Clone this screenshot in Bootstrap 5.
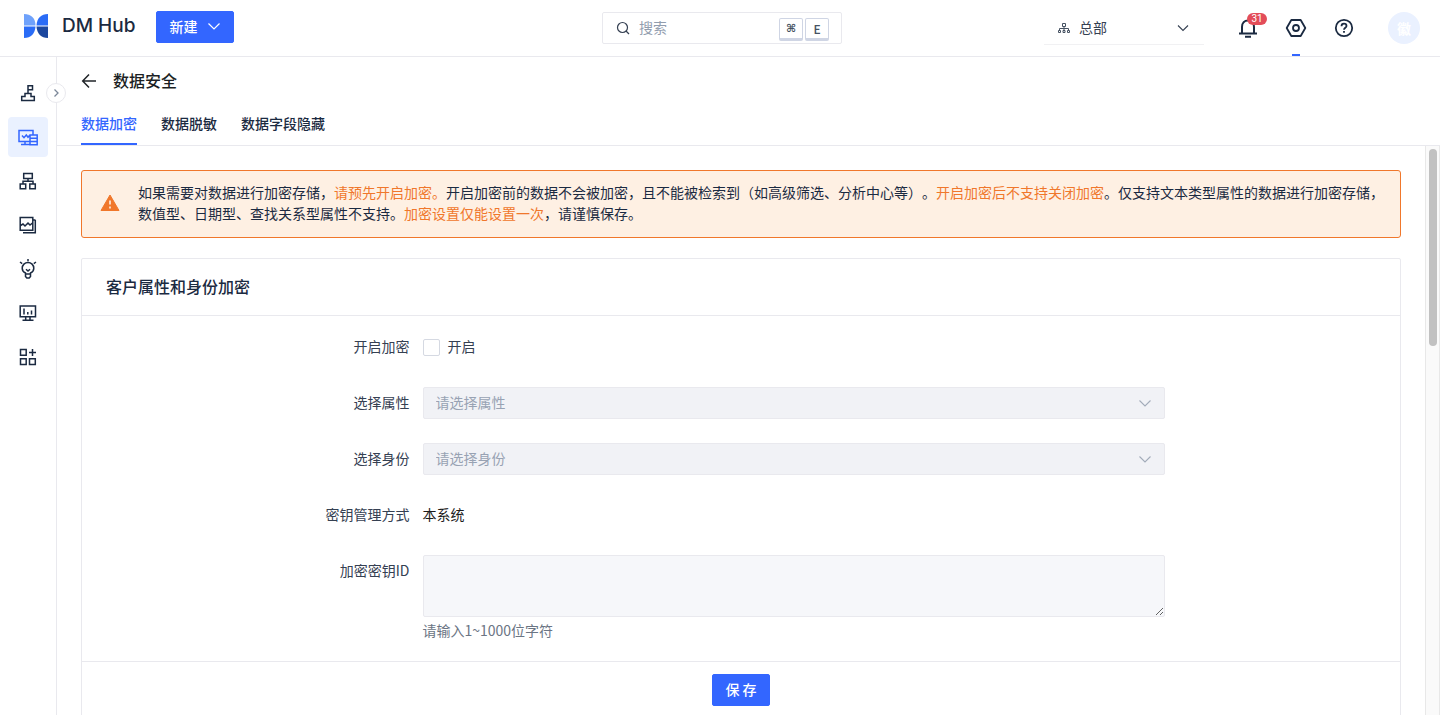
<!DOCTYPE html>
<html lang="zh-CN">
<head>
<meta charset="utf-8">
<meta name="viewport" content="width=device-width, initial-scale=1">
<title>数据安全 - DM Hub</title>
<link href="https://cdn.jsdelivr.net/npm/bootstrap@5.3.0/dist/css/bootstrap.min.css" rel="stylesheet">
<style>
  :root { --ink: #1b2a41; --brand: #3366ff; --line: #e9e9ee; --orange: #f0772b; }
  body { font-family: "Noto Sans CJK SC", sans-serif; font-size: 14px; line-height: 22px; color: var(--ink); background: #fff; text-spacing-trim: space-all; }
  svg { display: block; flex: none; }
  .stroke { fill: none; stroke: currentColor; stroke-width: 1.5; }
  .app-head { height: 57px; border-bottom: 1px solid var(--line); }
  .head-side { flex: 1 1 0; min-width: 0; }
  .head-left { padding: 11px 0 0 24px; gap: 21px; }
  .head-right { padding-right: 20px; gap: 24px; }
  .home-link { height: 30px; gap: 14px; }
  .logo-text { font: 500 19px/30px Inter, sans-serif; color: var(--ink); }
  .btn-brand { --bs-btn-bg: var(--brand); --bs-btn-border-color: var(--brand); --bs-btn-color: #fff; --bs-btn-hover-bg: #5581ff; --bs-btn-hover-color: #fff; --bs-btn-hover-border-color: #5581ff; --bs-btn-active-bg: #2350dd; --bs-btn-active-color: #fff; --bs-btn-border-radius: 2px; --bs-btn-padding-x: 12px; --bs-btn-font-size: 14px; --bs-btn-line-height: 22px; --bs-btn-font-weight: 500; padding-top: 3px; padding-bottom: 5px; }
  .btn-new { gap: 10px; }
  .search-box { width: 240px; height: 32px; margin-top: 12px; border: 1px solid var(--line); border-radius: 2px; padding: 0 12px; color: #354052; }
  .search-box input { min-width: 0; flex: 1; border: 0; outline: 0; padding: 0 0 2px; color: var(--ink); }
  .search-box input::placeholder { color: #929dae; }
  .key { width: 24px; height: 23px; margin-top: 3px; padding: 0; font: 500 12px/19px "Noto Sans CJK SC", sans-serif; text-align: center; color: #465262; background: #fff; border: 1px solid #cfd5e4; border-bottom-width: 3px; border-radius: 2px; }
  .key-cmd { font-family: "DejaVu Sans", sans-serif; font-size: 11px; font-weight: 700; }
  .org { width: 160px; height: 33px; position: relative; border-bottom: 1px solid #f1f1f3; margin-right: 8px; }
  .org > svg { position: absolute; left: 14px; top: 10px; pointer-events: none; }
  .org select { border: 0; border-radius: 0; padding: 0 36px 2px 35px; font-size: 14px; line-height: 30px; color: #354052; background-position: right 14px center; background-size: 14px; background-color: transparent; background-image: url("data:image/svg+xml,%3Csvg xmlns='http://www.w3.org/2000/svg' viewBox='0 0 14 14' fill='none' stroke='%23354052' stroke-width='1.1'%3E%3Cpath d='M2 4.5l5 5 5-5'/%3E%3C/svg%3E"); }
  .head-btn { width: 24px; height: 56px; padding: 0; border: 0; background: none; color: var(--ink); position: relative; display: flex; align-items: center; justify-content: center; }
  .head-btn.current::after { content: ""; position: absolute; bottom: 0; left: 8px; width: 8px; height: 2px; background: var(--brand); }
  .count { position: absolute; left: 11px; top: 13px; width: 20px; height: 12px; border-radius: 6px; background: #e34d59; color: #fff; font: 10px/12px Roboto, sans-serif; text-align: center; }
  .face { width: 32px; height: 32px; margin-left: 8px; padding: 0; border: 0; border-radius: 50%; background: #eaf1ff; color: #fff; font-size: 14px; font-weight: 700; }
  .shell { height: calc(100vh - 57px); }
  .side { width: 57px; flex: none; border-right: 1px solid var(--line); padding: 16px 8px 0; position: relative; }
  .side-link { width: 40px; height: 40px; border-radius: 4px; display: flex; align-items: center; justify-content: center; color: var(--ink); }
  .side-link.active { background: #eaf1ff; color: var(--brand); }
  .fold { position: absolute; right: -10px; top: 26px; width: 20px; height: 20px; padding: 0; border: 1px solid var(--line); border-radius: 50%; background: #fff; color: #7b8798; display: flex; align-items: center; justify-content: center; z-index: 2; }
  .page-head { border-bottom: 1px solid var(--line); padding: 0 24px; flex: none; }
  .page-title { font-size: 16px; line-height: 46px; padding-bottom: 2px; font-weight: 500; margin: 0; color: #1c1f24; }
  .tab { color: var(--ink); text-decoration: none; font-weight: 500; line-height: 22px; padding: 7px 0 9px; border-bottom: 2px solid transparent; height: 40px; }
  .tab.active { color: var(--brand); border-color: var(--brand); }
  .scroll-pane { min-width: 0; overflow: hidden; padding: 24px 24px 0; }
  .track { width: 15px; flex: none; background: #fafafa; border: 1px solid #e8e8e8; border-width: 0 1px; padding: 3px 2px 3px 3px; }
  .thumb { height: 35%; border-radius: 4px; background: #c1c1c1; }
  .notice { border: 1px solid var(--orange); border-radius: 3px; background: #fef0e3; padding: 11px 16px 13px 18px; line-height: 21px; gap: 18px; margin-bottom: 20px; }
  .hot { color: var(--orange); }
  .panel { border: 1px solid var(--line); border-radius: 2px; height: 100vh; }
  .panel-title { font-size: 16px; line-height: 24px; font-weight: 500; margin: 0; padding: 15px 24px 17px; border-bottom: 1px solid var(--line); }
  .panel-form { padding: 15px 0 18px; display: grid; row-gap: 24px; }
  .form-line { --bs-gutter-x: 22px; margin: 0; }
  .form-line > .name { padding: 4px 2px 6px 0; text-align: right; color: #354052; line-height: 22px; }
  .form-line > .field { width: 58%; }
  .plain { line-height: 22px; padding: 4px 0 6px; color: #1c1c1c; }
  .pick { height: 32px; font-size: 14px; line-height: 22px; padding: 3px 36px 5px 12px; border: 1px solid var(--line); border-radius: 2px; background-position: right 12px center; background-size: 14px; background-image: url("data:image/svg+xml,%3Csvg xmlns='http://www.w3.org/2000/svg' viewBox='0 0 14 14' fill='none' stroke='%23a3acba' stroke-width='1.1'%3E%3Cpath d='M1.500 4.500l5.500 5.500 5.500-5.500'/%3E%3C/svg%3E"); }
  .pick:disabled { color: #98a2b3; opacity: 1; background-color: #f1f2f6; }
  .tick { width: 17px; height: 17px; margin: 0; border: 1px solid #d5d9e2; border-radius: 2px !important; }
  .tick-label { color: #354052; padding-bottom: 2px; }
  .key-id { height: 62px; border: 1px solid var(--line); border-radius: 2px; font-size: 14px; padding: 4px 12px; }
  .key-id:disabled { background: #f6f7fa; }
  .hint { color: #6b7584; line-height: 22px; padding: 2px 0; }
  .panel-foot { border-top: 1px solid var(--line); padding: 12px; }
</style>
</head>
<body class="overflow-hidden">
<header class="app-head d-flex align-items-start">
  <div class="head-side head-left d-flex align-items-start">
    <a href="#" class="home-link d-flex align-items-center text-decoration-none">
      <svg width="24" height="24" viewBox="0 0 24 24"><path d="M0 0C7 0 11.500 4 11.500 11.500H0Z" fill="#6fa2fb"/><path d="M0 12.500H11.500C11 19.500 7 24 0 24Z" fill="#2a6cf6"/><path d="M24 0V11.500H12.500C13 4 17 0 24 0Z" fill="#2a6cf6"/><path d="M12.500 12.500H24V24C17 24 13 19.500 12.500 12.500Z" fill="#1c489f"/></svg>
      <span class="logo-text">DM Hub</span>
    </a>
    <button type="button" class="btn btn-brand btn-new d-flex align-items-center">新建
      <svg width="14" height="14" viewBox="0 0 14 14" fill="none" stroke="currentColor" stroke-width="1.200"><path d="M1.500 4.500 7 10l5.500-5.500"/></svg>
    </button>
  </div>
  <div class="search-box d-flex align-items-center gap-2">
    <svg width="16" height="16" viewBox="0 0 16 16" class="stroke" style="stroke-width:1.200"><circle cx="7.500" cy="7.500" r="5"/><path d="m11 11 3 3"/></svg>
    <input type="text" placeholder="搜索" aria-label="搜索">
    <span class="d-flex" style="gap:2px"><kbd class="key key-cmd">⌘</kbd><kbd class="key">E</kbd></span>
  </div>
  <div class="head-side head-right d-flex justify-content-end align-items-center">
    <div class="org">
      <svg width="12" height="12" viewBox="0 0 12 12" fill="none" stroke="#465262"><path d="M4.500 1.500h3v3h-3zM6 4.500v2.500M1.500 8.500V6.500h9v2M6 6.500v2M.5 8.500h2v2h-2zM5 8.500h2v2H5zM9.500 8.500h2v2h-2z"/></svg>
      <select class="form-select" aria-label="组织"><option>总部</option></select>
    </div>
    <button type="button" class="head-btn bell" aria-label="通知">
      <svg width="20" height="20" viewBox="0 0 20 20" class="stroke" style="stroke-width:2"><path d="M1 15.500h18M4 15.500V9c0-4 2.500-6.500 6-6.500s6 2.500 6 6.500v6.500M7 18.700h6"/></svg>
      <span class="count">31</span>
    </button>
    <button type="button" class="head-btn current" aria-label="设置">
      <svg width="22" height="20" viewBox="0 0 22 20" class="stroke" style="stroke-width:1.800"><path d="M6.300 2h9.400l4.600 8-4.600 8H6.300l-4.600-8z" stroke-linejoin="round"/><circle cx="11" cy="10" r="3"/></svg>
    </button>
    <button type="button" class="head-btn" aria-label="帮助">
      <svg width="20" height="20" viewBox="0 0 20 20" class="stroke" style="stroke-width:1.800"><circle cx="10" cy="10" r="8.200"/><path d="M7.500 8.200C7.500 6.500 8.600 5.700 10 5.700s2.500.9 2.500 2.300c0 1.700-2.500 1.900-2.500 3.700M10 13v1.800"/></svg>
    </button>
    <button type="button" class="face">徽</button>
  </div>
</header>

<div class="shell d-flex">
  <nav class="side d-flex flex-column gap-1" aria-label="主导航">
    <a href="#" class="side-link" aria-label="旅程"><svg width="20" height="20" viewBox="0 0 20 20" class="stroke"><path d="M10 10.500V2.700h4.500v4H10M3.700 17.500v-4H7v-3h6v3h3.300v4z"/></svg></a>
    <a href="#" class="side-link active" aria-label="数据"><svg width="20" height="20" viewBox="0 0 20 20" class="stroke"><path d="M15 7.500V3.500H1v11h10.500M3 17.500h9M7 14.500v3M4 8.500l2 2.200 2.300-2.700 1.700 2.300 1.500-1.800M12 8h7.200v9.700H12zM12 11.200h7.200M12 14.400h7.200"/></svg></a>
    <a href="#" class="side-link" aria-label="组织"><svg width="20" height="20" viewBox="0 0 20 20" class="stroke"><path d="M5.700 2.500h8.600v5H5.700zM10 7.500V10M5 13v-2.700h10V13M2.200 13h5.500v4.700H2.200zM11.800 13h5.500v4.700h-5.500z"/></svg></a>
    <a href="#" class="side-link" aria-label="内容"><svg width="20" height="20" viewBox="0 0 20 20" class="stroke"><path d="M2.200 2.500h12.600v12.800H2.200zM5 17.700h12.300V5M15.500 5h2M2.500 10.500 5 9l2 2 3-3 2 2 2.500-2"/></svg></a>
    <a href="#" class="side-link" aria-label="洞察"><svg width="20" height="20" viewBox="0 0 20 20" class="stroke"><path d="M7.500 15v-1C5.500 13 4.200 11.500 4.200 9.200a5.800 5.800 0 0 1 11.600 0c0 2.300-1.300 3.800-3.300 4.800v1zM7.500 15v2.500l1.300 1.500h2.400l1.300-1.500V15M8 10.200l2 1.800 2-1.800M10 0V2.300M2 3l2.200 1.600M18 3l-2.200 1.600"/></svg></a>
    <a href="#" class="side-link" aria-label="分析"><svg width="20" height="20" viewBox="0 0 20 20" class="stroke"><path d="M2.200 3h15.300v10.700H2.200zM6 5.500v6M9.800 9v2.500M13.500 7.500v4M7.700 14v3.200M12 14v3.200M4.500 17.300h11"/></svg></a>
    <a href="#" class="side-link" aria-label="应用"><svg width="20" height="20" viewBox="0 0 20 20" class="stroke"><path d="M2.500 2.500h5.700v5.700H2.500zM2.500 11.700h5.700v5.800H2.500zM11.500 11.700h5.800v5.800h-5.800zM14.500 2v7M11 5.500h7"/></svg></a>
    <button type="button" class="fold" aria-label="展开"><svg width="10" height="10" viewBox="0 0 10 10" class="stroke" style="stroke-width:1.300"><path d="m3.500 1.500 3.500 3.500-3.500 3.500"/></svg></button>
  </nav>

  <main class="d-flex flex-column flex-fill" style="min-width:0">
    <div class="page-head">
      <div class="d-flex align-items-center gap-3">
        <a href="#" class="text-dark" aria-label="返回"><svg width="16" height="16" viewBox="0 0 16 16" class="stroke"><path d="M15 8H2M8 1.500 1.700 8 8 14.500"/></svg></a>
        <h1 class="page-title">数据安全</h1>
      </div>
      <nav class="d-flex gap-4" aria-label="数据安全">
        <a href="#" class="tab active" aria-current="page">数据加密</a><a href="#" class="tab">数据脱敏</a><a href="#" class="tab">数据字段隐藏</a>
      </nav>
    </div>
    <div class="d-flex flex-fill" style="min-height:0">
      <div class="scroll-pane flex-fill">
        <div class="notice d-flex align-items-center" role="alert">
          <svg width="20" height="18" viewBox="0 0 20 18"><path d="M10 1 19 16.500H1z" fill="#f0772b" stroke="#f0772b" stroke-linejoin="round"/><path d="M10 6.500v4M10 12.500v2" stroke="#fef0e3" stroke-width="1.600"/></svg>
          <div>如果需要对数据进行加密存储，<span class="hot">请预先开启加密。</span>开启加密前的数据不会被加密，且不能被检索到（如高级筛选、分析中心等）。<span class="hot">开启加密后不支持关闭加密</span>。仅支持文本类型属性的数据进行加密存储，数值型、日期型、查找关系型属性不支持。<span class="hot">加密设置仅能设置一次</span>，请谨慎保存。</div>
        </div>
        <section class="panel">
          <h2 class="panel-title">客户属性和身份加密</h2>
          <form>
            <div class="panel-form">
              <div class="row form-line">
                <div class="col-3 name">开启加密</div>
                <div class="field d-flex align-items-center gap-2">
                  <input class="form-check-input tick" type="checkbox" id="enable"><label class="tick-label" for="enable">开启</label>
                </div>
              </div>
              <div class="row form-line">
                <label class="col-3 name" for="attr">选择属性</label>
                <div class="field"><select id="attr" class="form-select pick" disabled><option>请选择属性</option></select></div>
              </div>
              <div class="row form-line">
                <label class="col-3 name" for="ident">选择身份</label>
                <div class="field"><select id="ident" class="form-select pick" disabled><option>请选择身份</option></select></div>
              </div>
              <div class="row form-line">
                <div class="col-3 name">密钥管理方式</div>
                <div class="field"><div class="plain">本系统</div></div>
              </div>
              <div class="row form-line">
                <label class="col-3 name" for="keyid">加密密钥ID</label>
                <div class="field"><textarea id="keyid" class="form-control key-id" disabled></textarea><div class="hint">请输入1~1000位字符</div></div>
              </div>
            </div>
            <div class="panel-foot text-center"><button type="button" class="btn btn-brand">保 存</button></div>
          </form>
        </section>
      </div>
      <div class="track" aria-hidden="true"><div class="thumb"></div></div>
    </div>
  </main>
</div>
<script src="https://cdn.jsdelivr.net/npm/bootstrap@5.3.0/dist/js/bootstrap.bundle.min.js"></script>
</body>
</html>
